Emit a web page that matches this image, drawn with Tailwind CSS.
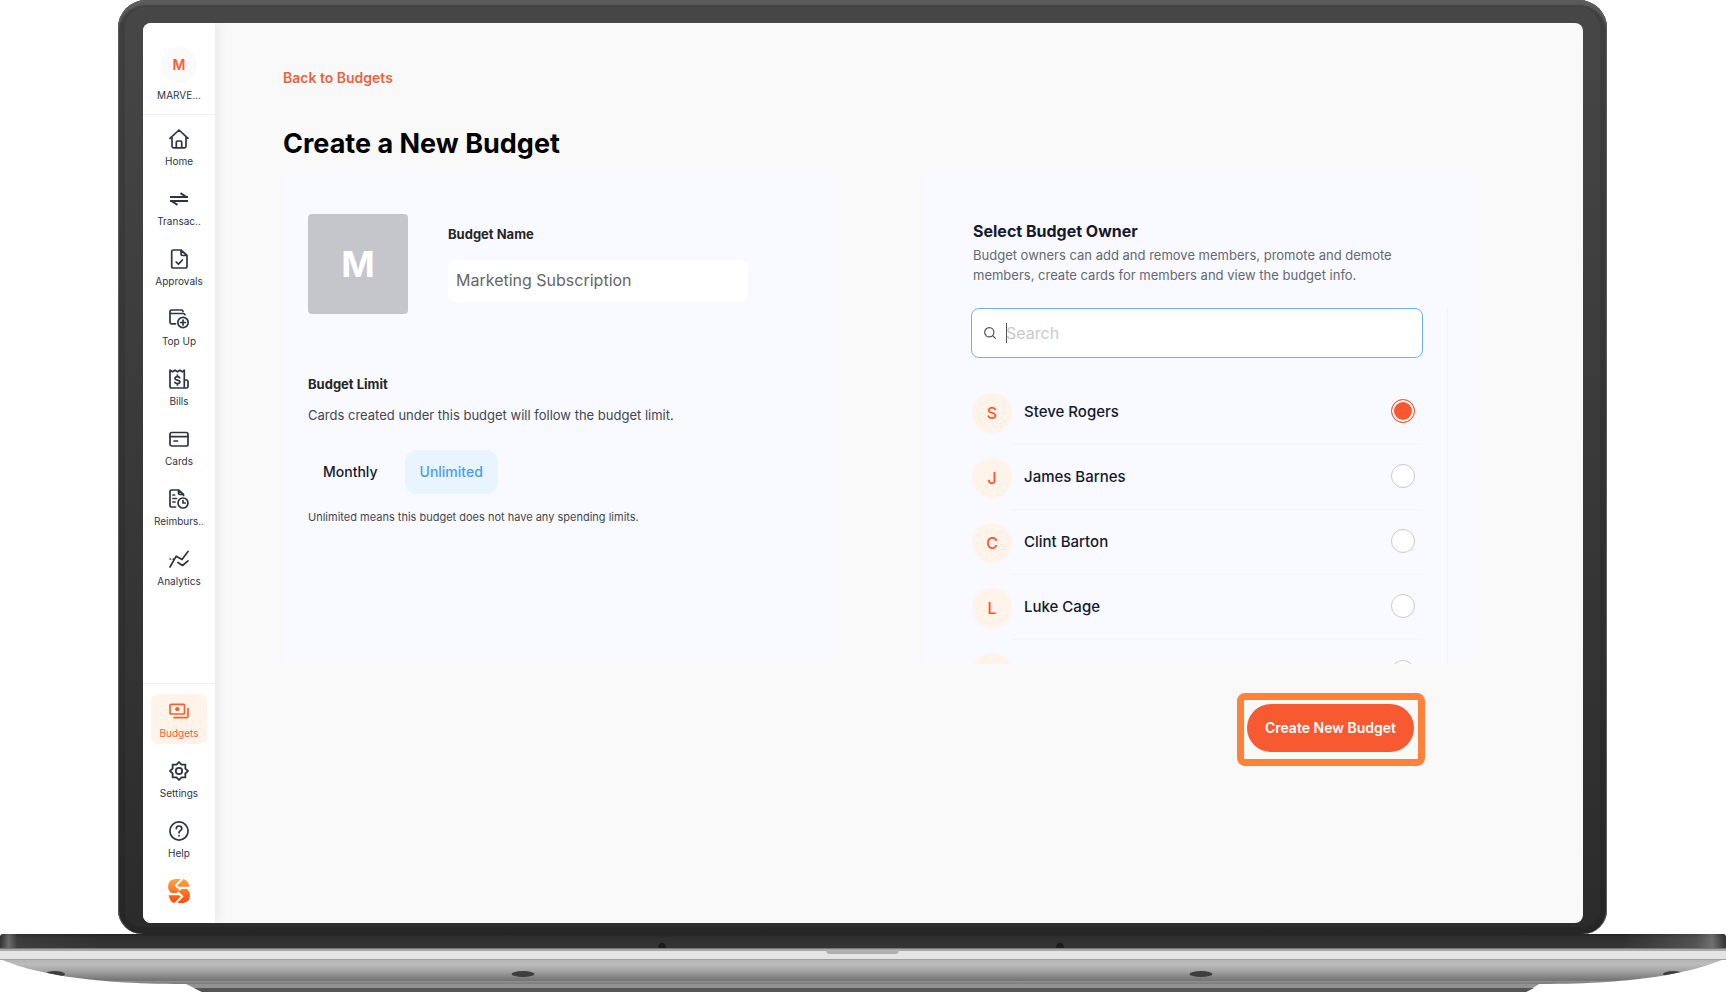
<!DOCTYPE html>
<html lang="en">
<head>
    <meta charset="UTF-8" />
    <meta name="viewport" content="width=device-width, initial-scale=1.0" />
    <title>Create a New Budget</title>
    <script src="https://cdn.jsdelivr.net/npm/@tailwindcss/browser@4"></script>
</head>
<body class="min-h-screen flex flex-col bg-white font-['Inter',sans-serif] text-[#14192e]">

    <!-- Laptop lid -->
    <div class="relative flex-1 flex flex-col ml-[118px] mr-[119px] pt-[23px] pb-[11px] pl-[25px] pr-6 rounded-t-[28px] rounded-b-[24px] bg-linear-to-b from-[#474747] to-[#2b2b2b] shadow-[inset_0_5px_2px_#5c5c5c,inset_0_0_0_7px_#00000018,inset_1px_0_0_#666,inset_-1px_0_0_#666]">
        <div class="flex-1 flex rounded-lg overflow-hidden bg-[#f9f9f9]">

            <!-- Sidebar -->
            <nav class="w-[72px] shrink-0 flex flex-col bg-white text-[10px] leading-3 text-[#2f3443] shadow-[2px_0_12px_rgba(0,0,0,0.08)]">
                <div class="flex flex-col items-center pt-6 pb-[13px] border-b border-[#f1f1f3]">
                    <span class="size-9 rounded-full bg-[#fafafa] flex items-center justify-center text-sm font-semibold text-[#f9602f]">M</span>
                    <span class="mt-[6px]">MARVE...</span>
                </div>
                <div class="flex flex-col gap-[10px] px-2 pt-[7px]">
                    <a href="#" class="h-[50px] pt-[7px] flex flex-col items-center gap-[6px]">
                        <svg class="size-5" viewBox="0 0 20 20" fill="none" stroke="currentColor" stroke-width="1.7" stroke-linejoin="round" stroke-linecap="round">
                            <path d="M1 9.4 10 1l9 8.4M3 8v9.2c0 1 .6 1.6 1.600 1.600h10.800c1 0 1.600-.6 1.600-1.600V8M7.300 18.500v-5.300c0-.8.4-1.200 1.200-1.200h3c.8 0 1.200.4 1.200 1.200v5.300" />
                        </svg>
                        <span>Home</span>
                    </a>
                    <a href="#" class="h-[50px] pt-[7px] flex flex-col items-center gap-[6px]">
                        <svg class="size-5" viewBox="0 0 20 20" fill="none" stroke="currentColor" stroke-width="2" stroke-linejoin="round">
                            <path d="M1 8h18M1 12h18" />
                            <path d="M11.500 4.200 17.500 8M8.500 15.800 2.500 12" />
                        </svg>
                        <span>Transac..</span>
                    </a>
                    <a href="#" class="h-[50px] pt-[7px] flex flex-col items-center gap-[6px]">
                        <svg class="size-5" viewBox="0 0 20 20" fill="none" stroke="currentColor" stroke-width="1.7" stroke-linejoin="round" stroke-linecap="round">
                            <path d="M4.500 1H12l6 5.500v10.700c0 1-.7 1.800-1.800 1.800H4.500c-1 0-1.800-.7-1.800-1.800V2.800C2.700 1.800 3.400 1 4.500 1ZM12 1.200v3.800c0 1 .6 1.500 1.500 1.500h4.300M7.200 13l2.200 2.200 4-4.200" />
                        </svg>
                        <span>Approvals</span>
                    </a>
                    <a href="#" class="h-[50px] pt-[7px] flex flex-col items-center gap-[6px]">
                        <svg class="size-5" viewBox="0 0 20 20" fill="none" stroke="currentColor" stroke-width="1.7" stroke-linejoin="round" stroke-linecap="round">
                            <path d="M6.500 14.800H2.600c-1 0-1.600-.6-1.600-1.600V2.600C1 1.600 1.600 1 2.600 1h9.800c1 0 1.600.6 1.600 1.500M1 3.200c0 1 .6 1.300 1.600 1.300h11.800c.9 0 1.400.5 1.600 1.200" />
                            <circle cx="14" cy="13.500" r="5.200" />
                            <path d="M14 11v5M11.500 13.500h5" />
                        </svg>
                        <span>Top Up</span>
                    </a>
                    <a href="#" class="h-[50px] pt-[7px] flex flex-col items-center gap-[6px]">
                        <svg class="size-5" viewBox="0 0 20 20" fill="none" stroke="currentColor" stroke-width="1.7" stroke-linejoin="round" stroke-linecap="round">
                            <path d="M1 1.200 3.500 2.800 6 1.200l2.500 1.600L11 1.200l2.300 1.600 2-1.600V19H2.800C1.700 19 1 18.300 1 17.200ZM15.300 11h2.200c1 0 1.500.5 1.500 1.400v5c0 1-.6 1.600-1.500 1.600h-2.200" />
                            <path d="M10.700 8.700C10.200 8 9.300 7.700 8.300 7.700 7 7.700 6 8.300 6 9.400c0 2.400 4.900.9 4.900 3.400 0 1.100-1.100 1.700-2.500 1.700-1.100 0-2-.4-2.500-1.100M8.400 6.200v1.500M8.400 14.500V16" />
                        </svg>
                        <span>Bills</span>
                    </a>
                    <a href="#" class="h-[50px] pt-[7px] flex flex-col items-center gap-[6px]">
                        <svg class="size-5" viewBox="0 0 20 20" fill="none" stroke="currentColor" stroke-width="1.700" stroke-linecap="round">
                            <rect x="1" y="3.500" width="18" height="13.500" rx="1.800" />
                            <path d="M1 7.700h18M5 12h3.500" />
                        </svg>
                        <span>Cards</span>
                    </a>
                    <a href="#" class="h-[50px] pt-[7px] flex flex-col items-center gap-[6px]">
                        <svg class="size-5" viewBox="0 0 20 20" fill="none" stroke="currentColor" stroke-width="1.700" stroke-linejoin="round" stroke-linecap="round">
                            <path d="M6.500 18H2.600c-1 0-1.600-.6-1.600-1.600V2.600C1 1.600 1.600 1 2.600 1H9.500l5 4.500v1M9.500 1.200v3c0 .9.400 1.300 1.300 1.300h3.500M4 6h1.500M4 9.500h3.500M4 13h2" />
                            <circle cx="14" cy="14" r="5" />
                            <path d="M14 11.500V14h2.200" />
                        </svg>
                        <span>Reimburs..</span>
                    </a>
                    <a href="#" class="h-[50px] pt-[7px] flex flex-col items-center gap-[6px]">
                        <svg class="size-5" viewBox="0 0 20 20" fill="none" stroke="currentColor" stroke-width="1.700" stroke-linejoin="round" stroke-linecap="round">
                            <path d="M1 18 7.200 7.200l5.800 3.300L19 2.500M9 13.500l4.500 3L19 11.800M1.200 10h.3M4.200 10h.3" />
                        </svg>
                        <span>Analytics</span>
                    </a>
                </div>

                <div class="mt-auto flex flex-col gap-[10px] px-2 pt-[10px] pb-5 border-t border-[#eff0f7]">
                    <a href="#" class="h-[50px] pt-[7px] flex flex-col items-center gap-[6px] rounded-lg bg-[#fff3ea] text-[#f9602f]">
                        <svg class="size-5" viewBox="0 0 20 20" fill="none" stroke="currentColor" stroke-width="1.700" stroke-linejoin="round" stroke-linecap="round">
                            <rect x="1" y="3.300" width="14.500" height="9.700" rx="1" />
                            <path d="M19 7.500v7.500c0 1-.6 1.600-1.600 1.600H5" />
                            <circle cx="8.200" cy="8.200" r="1.300" fill="currentColor" />
                        </svg>
                        <span>Budgets</span>
                    </a>
                    <a href="#" class="h-[50px] pt-[7px] flex flex-col items-center gap-[6px]">
                        <svg class="size-5" viewBox="0 0 20 20" fill="none" stroke="currentColor" stroke-width="1.800" stroke-linejoin="round">
                            <path d="M10 1 12.500 3.700 16.400 3.600 16.300 7.500 19 10 16.300 12.500 16.400 16.400 12.500 16.300 10 19 7.500 16.300 3.600 16.400 3.700 12.500 1 10 3.700 7.500 3.600 3.600 7.500 3.700Z" />
                            <circle cx="10" cy="10" r="3.200" />
                        </svg>
                        <span>Settings</span>
                    </a>
                    <a href="#" class="h-[50px] pt-[7px] flex flex-col items-center gap-[6px]">
                        <svg class="size-5" viewBox="0 0 20 20" fill="none" stroke="currentColor" stroke-width="1.700" stroke-linecap="round">
                            <circle cx="10" cy="10" r="9.100" />
                            <path d="M7.300 7.600C7.300 6 8.400 5 10 5s2.800 1 2.800 2.500c0 2.200-2.800 2.100-2.800 4.300M10 14.600v.2" />
                        </svg>
                        <span>Help</span>
                    </a>
                    <svg class="mt-[5px] w-[22px] h-6 self-center" viewBox="0 0 21 23">
                        <defs>
                            <linearGradient id="brand" x1="0" y1="0" x2="0" y2="1">
                                <stop offset="0" stop-color="#ffa63d" />
                                <stop offset="1" stop-color="#ff4a0a" />
                            </linearGradient>
                        </defs>
                        <path d="M7 0H15Q19 1 20.500 7.500L18 9.500Q21 12 21 16Q21 22 14 23H6Q2 22 .5 15.500L3 13.500Q0 11 0 7Q0 1 7 0Z" fill="url(#brand)" />
                        <path d="M14.500-1 7.500 6.300 12 10.500M9.500 8.500h12.500M6.500 24l7-7.300L9 12.500M11.500 14.500H-1" fill="none" stroke="#fff" stroke-width="2" />
                    </svg>
                </div>
            </nav>

            <!-- Page -->
            <main class="flex-1 pl-[68px] pr-[110px] pt-[45px]">
                <a href="#" class="block text-sm leading-5 font-semibold text-[#e9643f]">Back to Budgets</a>
                <h1 class="mt-9 text-[27px] leading-10 font-bold text-black">Create a New Budget</h1>

                <form onsubmit="return false">
                    <div class="mt-[10px] grid grid-cols-2 gap-[90px]">

                        <!-- Budget details -->
                        <section class="h-[490px] rounded-lg bg-[#f9faff] pt-10 px-[25px]">
                            <div class="flex gap-10">
                                <div class="size-[100px] rounded bg-[#c5c6cc] flex items-center justify-center text-4xl font-bold text-white">M</div>
                                <div class="pt-[10px]">
                                    <label for="name" class="block text-[13px] leading-5 font-bold text-[#262626]">Budget Name</label>
                                    <input id="name" type="text" value="Marketing Subscription" class="mt-4 w-[300px] h-[42px] px-2 pb-[2px] rounded-lg bg-white text-base text-[#666] outline-none" />
                                </div>
                            </div>
                            <h2 class="mt-[60px] text-[13px] leading-5 font-bold text-[#262626]">Budget Limit</h2>
                            <p class="mt-[11px] text-[13px] leading-5 text-[#43464f]">Cards created under this budget will follow the budget limit.</p>
                            <div class="mt-[25px] flex gap-3">
                                <button type="button" class="h-11 px-[15px] rounded-xl text-sm font-medium">Monthly</button>
                                <button type="button" class="h-11 px-[15px] rounded-xl bg-[#e8f4ff] text-sm font-medium text-[#4b9cf0]">Unlimited</button>
                            </div>
                            <p class="mt-[15px] text-[11px] leading-4 text-[#43464f]">Unlimited means this budget does not have any spending limits.</p>
                        </section>

                        <!-- Budget owner -->
                        <section class="h-[490px] rounded-lg bg-[#f9faff] pt-[47px] pl-12 pr-[25px] overflow-hidden">
                            <h2 class="pl-[2px] text-base leading-5 font-bold">Select Budget Owner</h2>
                            <p class="mt-1 pl-[2px] pr-6 text-[13px] leading-5 text-[#646873]">Budget owners can add and remove members, promote and demote members, create cards for members and view the budget info.</p>
                            <div class="mt-[23px] pr-6 border-r border-[#f4f5f8]">
                                <div class="relative flex items-center gap-[10px] h-[50px] px-3 rounded-lg border border-[#6fb1ee] bg-white">
                                    <label for="search">
                                        <svg class="size-3" viewBox="0 0 12 12" fill="none" stroke="#4b4e58" stroke-width="1.200" stroke-linecap="round">
                                            <circle cx="5.300" cy="5.300" r="4.600" />
                                            <path d="m8.600 8.600 2.800 2.800" />
                                        </svg>
                                    </label>
                                    <input id="search" type="text" aria-label="Search" placeholder="Search" class="flex-1 text-base placeholder:text-[#c9cacf] outline-none" />
                                    <span class="absolute left-[34px] top-[14px] w-px h-5 bg-[#555]"></span>
                                </div>

                                <div class="mt-[22px]">
                                    <label class="flex items-center h-[65px] pl-px">
                                        <span class="size-10 rounded-full bg-[#fff3ea] flex items-center justify-center font-medium text-[#f9572f]">S</span>
                                        <span class="flex-1 self-stretch flex items-center justify-between pl-3 pr-2 border-b border-[#f3f4f8] text-[15px] font-medium">Steve Rogers
                                            <input type="radio" name="owner" checked class="mb-[2px] appearance-none size-6 rounded-full border border-[#c9cacf] bg-white checked:border-[#f9572f] checked:bg-[#f9572f] checked:shadow-[inset_0_0_0_2px_white]" />
                                        </span>
                                    </label>
                                    <label class="flex items-center h-[65px] pl-px">
                                        <span class="size-10 rounded-full bg-[#fff3ea] flex items-center justify-center font-medium text-[#f9572f]">J</span>
                                        <span class="flex-1 self-stretch flex items-center justify-between pl-3 pr-2 border-b border-[#f3f4f8] text-[15px] font-medium">James Barnes
                                            <input type="radio" name="owner" class="mb-[2px] appearance-none size-6 rounded-full border border-[#c9cacf] bg-white checked:border-[#f9572f] checked:bg-[#f9572f] checked:shadow-[inset_0_0_0_2px_white]" />
                                        </span>
                                    </label>
                                    <label class="flex items-center h-[65px] pl-px">
                                        <span class="size-10 rounded-full bg-[#fff3ea] flex items-center justify-center font-medium text-[#f9572f]">C</span>
                                        <span class="flex-1 self-stretch flex items-center justify-between pl-3 pr-2 border-b border-[#f3f4f8] text-[15px] font-medium">Clint Barton
                                            <input type="radio" name="owner" class="mb-[2px] appearance-none size-6 rounded-full border border-[#c9cacf] bg-white checked:border-[#f9572f] checked:bg-[#f9572f] checked:shadow-[inset_0_0_0_2px_white]" />
                                        </span>
                                    </label>
                                    <label class="flex items-center h-[65px] pl-px">
                                        <span class="size-10 rounded-full bg-[#fff3ea] flex items-center justify-center font-medium text-[#f9572f]">L</span>
                                        <span class="flex-1 self-stretch flex items-center justify-between pl-3 pr-2 border-b border-[#f3f4f8] text-[15px] font-medium">Luke Cage
                                            <input type="radio" name="owner" class="mb-[2px] appearance-none size-6 rounded-full border border-[#c9cacf] bg-white checked:border-[#f9572f] checked:bg-[#f9572f] checked:shadow-[inset_0_0_0_2px_white]" />
                                        </span>
                                    </label>
                                    <label class="flex items-center h-[65px] pl-px">
                                        <span class="size-10 rounded-full bg-[#fff3ea]"></span>
                                        <span class="flex-1 self-stretch flex items-center justify-end pl-3 pr-2">
                                            <input type="radio" name="owner" class="mb-[2px] appearance-none size-6 rounded-full border border-[#c9cacf] bg-white checked:border-[#f9572f] checked:bg-[#f9572f] checked:shadow-[inset_0_0_0_2px_white]" />
                                        </span>
                                    </label>
                                </div>
                            </div>
                        </section>
                    </div>

                    <div class="mt-[29px] mr-12 flex justify-end">
                        <div class="border-[7px] border-[#ff8239] rounded-lg pt-1 pb-[7px] pl-[3px] pr-1">
                            <button type="submit" class="h-12 px-[18px] rounded-full bg-[#f75a30] text-sm font-semibold text-white">Create New Budget</button>
                        </div>
                    </div>
                </form>
            </main>
        </div>
    </div>

    <!-- Laptop base -->
    <svg class="block w-full h-[58px]" viewBox="0 0 1726 58" preserveAspectRatio="none">
        <defs>
            <linearGradient id="deck" x1="0" y1="0" x2="0" y2="1">
                <stop offset="0" stop-color="#242424" />
                <stop offset="0.3" stop-color="#303030" />
                <stop offset="1" stop-color="#353535" />
            </linearGradient>
            <linearGradient id="shine" x1="0" y1="0" x2="1" y2="0">
                <stop offset="0" stop-color="#fff" stop-opacity="0" />
                <stop offset="0.005" stop-color="#fff" stop-opacity="0.28" />
                <stop offset="0.01" stop-color="#fff" stop-opacity="0.05" />
                <stop offset="0.06" stop-color="#fff" stop-opacity="0" />
                <stop offset="0.94" stop-color="#fff" stop-opacity="0" />
                <stop offset="0.982" stop-color="#fff" stop-opacity="0.15" />
                <stop offset="0.992" stop-color="#fff" stop-opacity="0.3" />
                <stop offset="1" stop-color="#fff" stop-opacity="0" />
            </linearGradient>
            <linearGradient id="belly" x1="0" y1="0" x2="0" y2="1">
                <stop offset="0" stop-color="#b2b2b2" />
                <stop offset="0.2" stop-color="#bdbdbd" />
                <stop offset="0.5" stop-color="#9f9f9f" />
                <stop offset="0.82" stop-color="#737373" />
                <stop offset="0.86" stop-color="#8d8d8d" />
                <stop offset="1" stop-color="#747474" />
            </linearGradient>
            <clipPath id="hull">
                <path d="M0 25H1724C1694 38 1640 50 1540 50H184C84 50 30 38 0 25Z" />
            </clipPath>
        </defs>
        <path d="M184 49H1541L1526 58H202Z" fill="#929292" />
        <path d="M194 54H1534L1526 58H202Z" fill="#555" />
        <g clip-path="url(#hull)">
            <rect y="25" width="1726" height="26" fill="url(#belly)" />
            <ellipse cx="55" cy="40" rx="10" ry="3" fill="#3e3e3e" />
            <ellipse cx="523" cy="40" rx="11.500" ry="3" fill="#3e3e3e" />
            <ellipse cx="1201" cy="40" rx="11.500" ry="3" fill="#3e3e3e" />
            <ellipse cx="1673" cy="40" rx="10" ry="3" fill="#3e3e3e" />
        </g>
        <path d="M0 3Q0 0 3 0H1723Q1726 0 1726 3V14H0Z" fill="url(#deck)" />
        <path d="M0 3Q0 0 3 0H1723Q1726 0 1726 3V14H0Z" fill="url(#shine)" />
        <path d="M658 14C658 7 666 7 666 14ZM1056 14C1056 7 1064 7 1064 14Z" fill="#1b1b1b" />
        <rect y="14" width="1726" height="12" fill="#e4e4e4" />
        <rect y="14" width="1726" height="1" fill="#777" />
        <rect y="15" width="1726" height="2" fill="#a9a9a9" />
        <rect y="25" width="1726" height="1" fill="#a0a0a0" />
        <path d="M826 16H899C899 19 897 20 895 20H830C828 20 826 19 826 16Z" fill="#b0b0b0" />
    </svg>
</body>
</html>
